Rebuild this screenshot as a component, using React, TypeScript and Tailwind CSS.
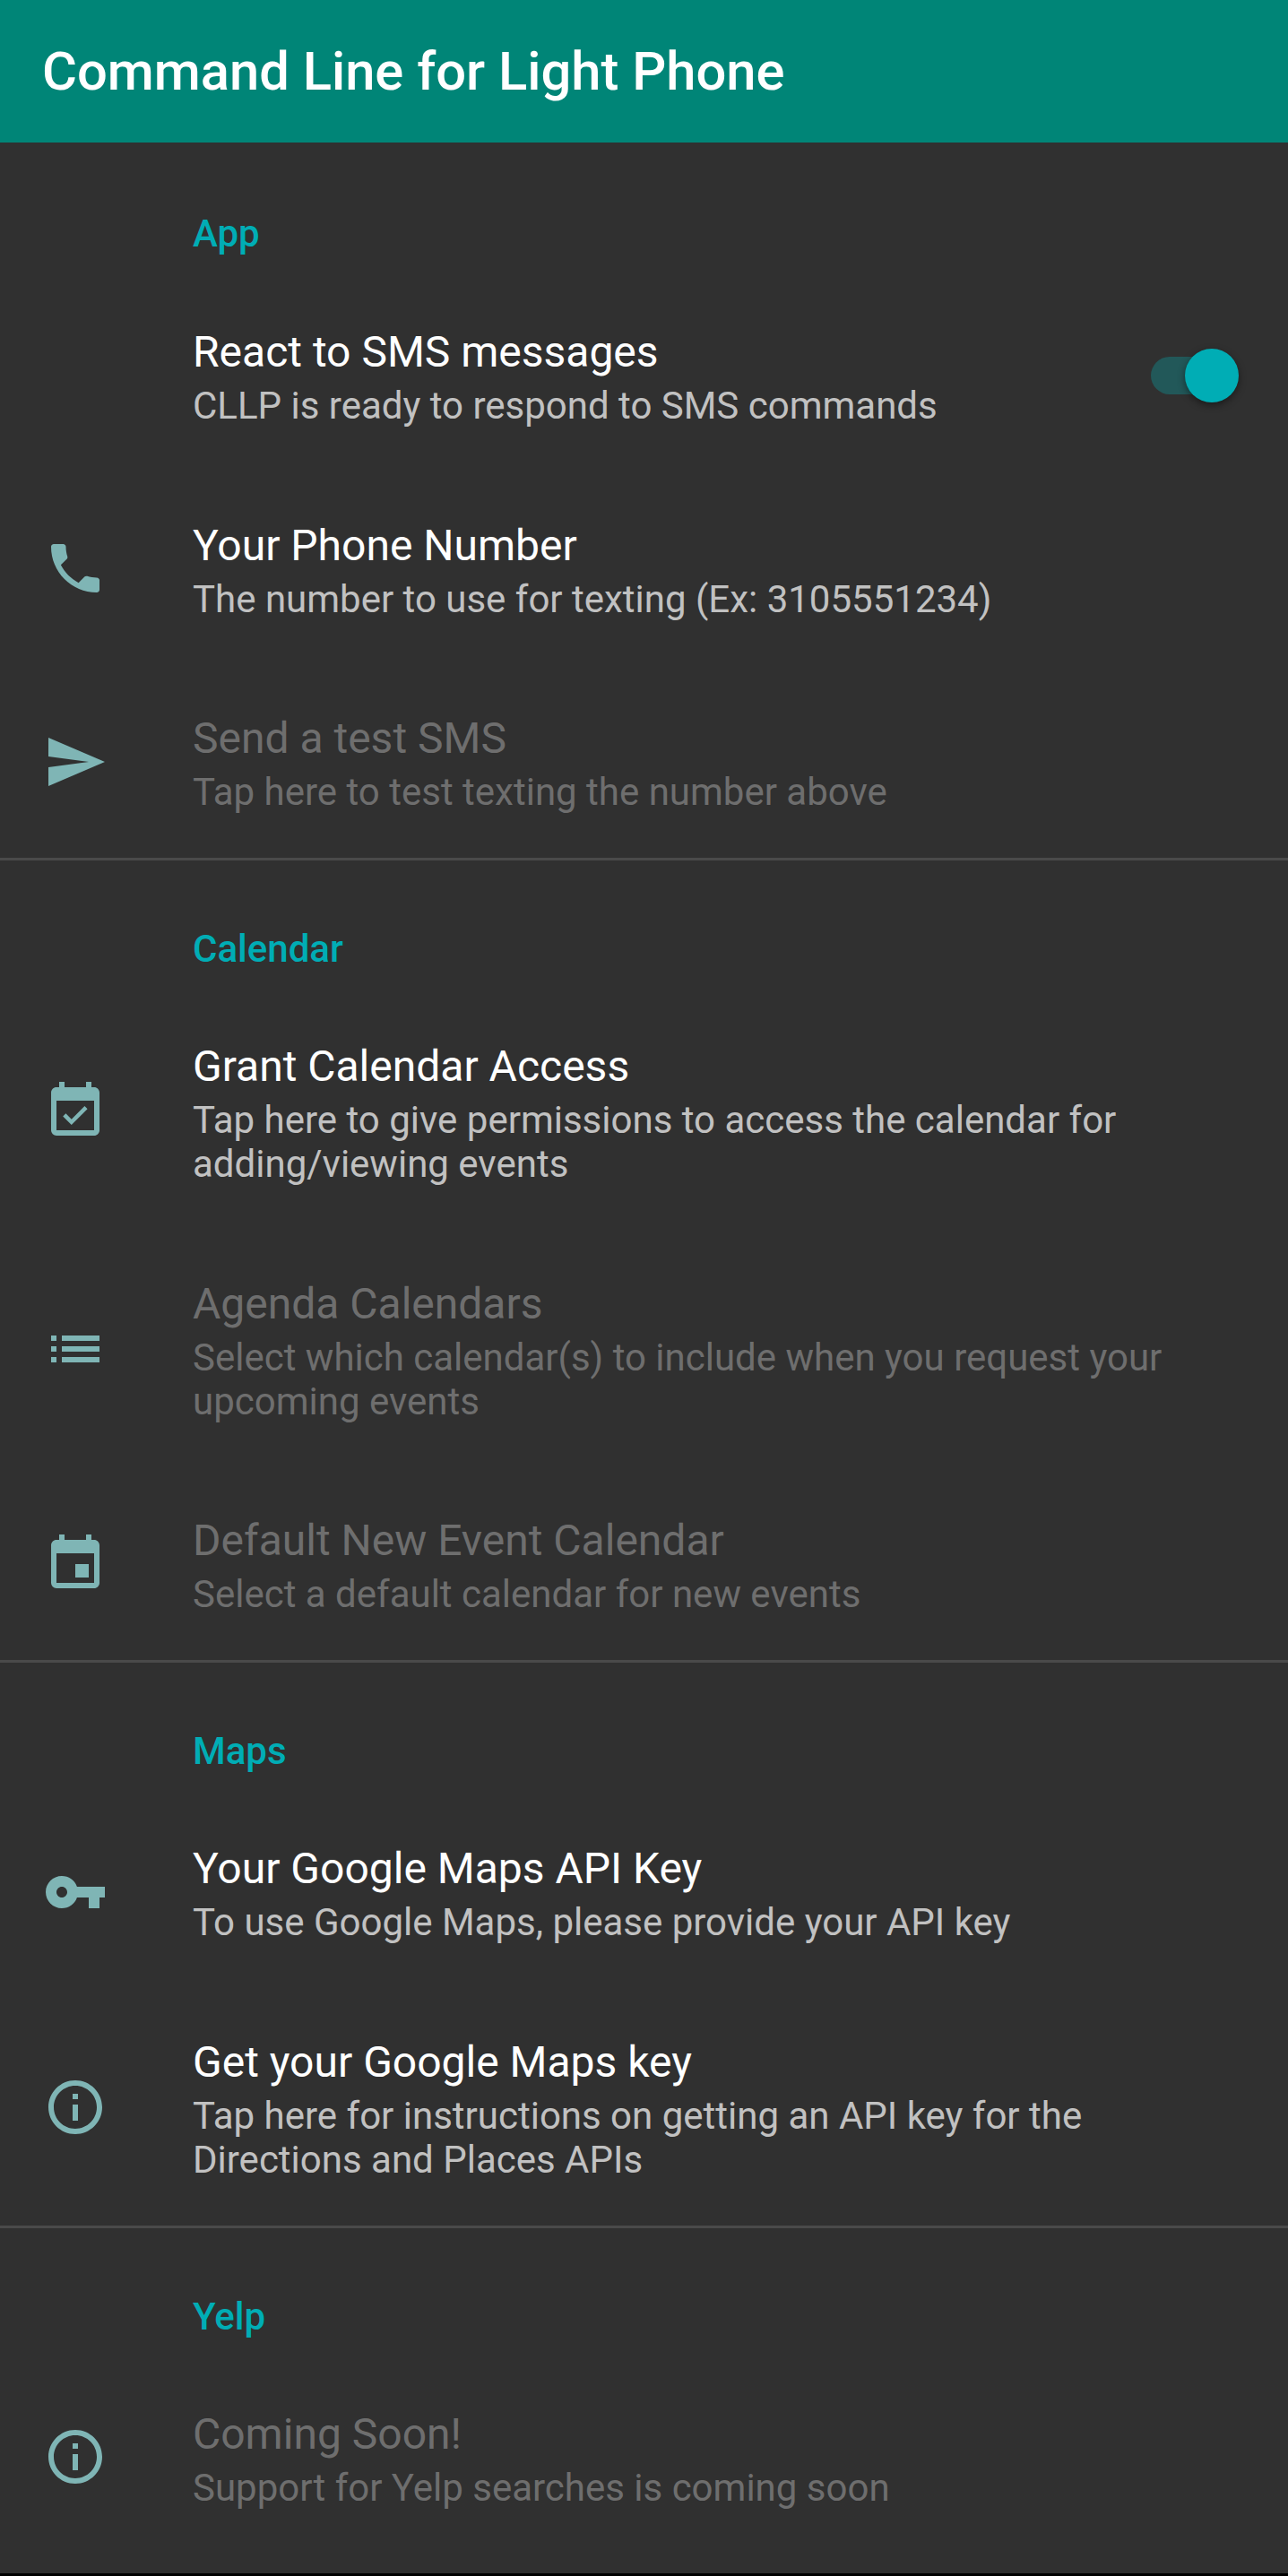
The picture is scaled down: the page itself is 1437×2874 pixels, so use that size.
import type { IconType } from "react-icons";
import {
    MdEvent,
    MdEventAvailable,
    MdInfoOutline,
    MdList,
    MdPhone,
    MdSend,
    MdVpnKey,
} from "react-icons/md";

type Preference = {
    title: string;
    summary: string;
    icon?: IconType;
    disabled?: boolean;
    toggle?: boolean;
};

type Category = {
    name: string;
    items: Preference[];
};

const categories: Category[] = [
    {
        name: "App",
        items: [
            { title: "React to SMS messages", summary: "CLLP is ready to respond to SMS commands", toggle: true },
            { title: "Your Phone Number", summary: "The number to use for texting (Ex: 3105551234)", icon: MdPhone },
            { title: "Send a test SMS", summary: "Tap here to test texting the number above", icon: MdSend, disabled: true },
        ],
    },
    {
        name: "Calendar",
        items: [
            {
                title: "Grant Calendar Access",
                summary: "Tap here to give permissions to access the calendar for adding/viewing events",
                icon: MdEventAvailable,
            },
            {
                title: "Agenda Calendars",
                summary: "Select which calendar(s) to include when you request your upcoming events",
                icon: MdList,
                disabled: true,
            },
            {
                title: "Default New Event Calendar",
                summary: "Select a default calendar for new events",
                icon: MdEvent,
                disabled: true,
            },
        ],
    },
    {
        name: "Maps",
        items: [
            { title: "Your Google Maps API Key", summary: "To use Google Maps, please provide your API key", icon: MdVpnKey },
            {
                title: "Get your Google Maps key",
                summary: "Tap here for instructions on getting an API key for the Directions and Places APIs",
                icon: MdInfoOutline,
            },
        ],
    },
    {
        name: "Yelp",
        items: [
            { title: "Coming Soon!", summary: "Support for Yelp searches is coming soon", icon: MdInfoOutline, disabled: true },
        ],
    },
];

function Toggle() {
    return (
        <button
            role="switch"
            aria-checked="true"
            className="mt-px flex h-[42px] w-[92px] shrink-0 items-center justify-end rounded-full bg-[#225859]"
        >
            <span className="-mr-[6px] size-[60px] shrink-0 rounded-full bg-[#00adb5] shadow-[0_3px_8px_rgba(0,0,0,0.45)]" />
        </button>
    );
}

function PreferenceRow({ title, summary, icon: Icon, disabled, toggle }: Preference) {
    return (
        <div className="flex items-center pr-[61px] pl-12">
            <div className="mt-px w-[167px] shrink-0">
                {Icon && <Icon className="size-[72px] text-[#7fb5b5]" />}
            </div>
            <div className="-mr-4 flex-1 pt-[54.5px] pb-[49px]">
                <div className={`text-[48px] leading-[56px] ${disabled ? "text-[#6e6e6e]" : "text-white"}`}>
                    {title}
                </div>
                <div className={`mt-[7px] text-[42px] leading-[49px] ${disabled ? "text-[#6e6e6e]" : "text-[#c1c1c1]"}`}>
                    {summary}
                </div>
            </div>
            {toggle && <Toggle />}
        </div>
    );
}

export default function App() {
    return (
        <div className="flex h-[2874px] w-full flex-col overflow-hidden border-b-[3px] border-black bg-[#303030] font-['Roboto',sans-serif]">
            <header className="flex h-[159px] shrink-0 items-center bg-[#008577] px-[47px]">
                <h1 className="text-[59.7px] leading-[70px] font-medium text-white">Command Line for Light Phone</h1>
            </header>

            {categories.map((category, index) => (
                <section key={category.name} className="shrink-0">
                    <div className={`border-t-[3px] pt-[74px] pl-[215px] ${index > 0 ? "h-[150.5px] border-[#4a4a4a]" : "h-[151.5px] border-transparent"}`}>
                        <h2 className="text-[42px] leading-[49px] font-medium text-[#00adb5]">{category.name}</h2>
                    </div>
                    {category.items.map((item) => (
                        <PreferenceRow key={item.title} {...item} />
                    ))}
                </section>
            ))}
        </div>
    );
}
